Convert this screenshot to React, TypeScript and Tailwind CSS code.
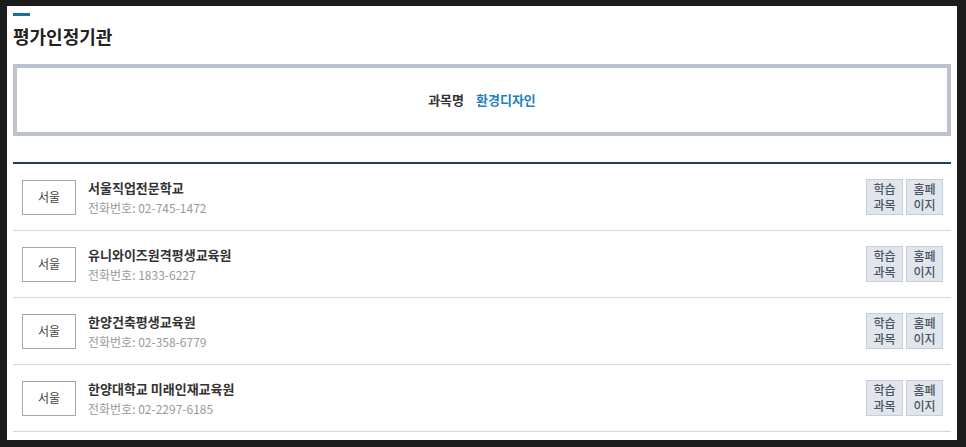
const FONT = '"Noto Sans CJK KR", "Noto Sans", sans-serif'

const institutions = [
  { region: '서울', name: '서울직업전문학교', phone: '02-745-1472' },
  { region: '서울', name: '유니와이즈원격평생교육원', phone: '1833-6227' },
  { region: '서울', name: '한양건축평생교육원', phone: '02-358-6779' },
  { region: '서울', name: '한양대학교 미래인재교육원', phone: '02-2297-6185' },
]

function SmallButton({ top, bottom }: { top: string; bottom: string }) {
  return (
    <button
      type="button"
      className="flex h-[36px] w-[37px] flex-col items-center justify-center border border-[#c8ced8] bg-[#e1e5ec] text-[12px] font-medium leading-[16px] text-[#4b5564]"
    >
      <span>{top}</span>
      <span>{bottom}</span>
    </button>
  )
}

export default function App() {
  return (
    <div className="h-[447px] w-[966px] bg-[#1c1c1c] pb-[7px] pl-[7px] pr-[9px] pt-[6px]" style={{ fontFamily: FONT }}>
      <div className="h-full w-full bg-white px-[6px] pt-[7px]">
        {/* section heading */}
        <div className="h-[3px] w-[17px] bg-[#1b6f9e]" />
        <h2 className="mt-[6px] text-[18px] font-bold leading-[28px] text-[#222]">평가인정기관</h2>

        {/* subject box */}
        <div className="mt-[14px] flex h-[72px] items-center justify-center border-[4px] border-[#bcc3cf] text-[13px] font-bold">
          <span className="text-[#333]">과목명</span>
          <span className="ml-[12px] text-[#1f7fc0]">환경디자인</span>
        </div>

        {/* institution list */}
        <ul className="mt-[26px] border-t-2 border-[#1d3f66]">
          {institutions.map((item) => (
            <li key={item.name} className="flex h-[67px] items-center border-b border-[#d6d6d6] pl-[9px] pr-[8px]">
              <div className="flex h-[35px] w-[54px] items-center justify-center border border-[#9ea7b3] text-[12px] text-[#444]">
                {item.region}
              </div>
              <div className="ml-[12px] flex flex-1 flex-col">
                <strong className="text-[13px] font-bold leading-[18px] text-[#333]">{item.name}</strong>
                <span className="mt-[2px] text-[12px] leading-[17px] text-[#999]">전화번호: {item.phone}</span>
              </div>
              <div className="flex gap-[3px]">
                <SmallButton top="학습" bottom="과목" />
                <SmallButton top="홈페" bottom="이지" />
              </div>
            </li>
          ))}
        </ul>
      </div>
    </div>
  )
}
